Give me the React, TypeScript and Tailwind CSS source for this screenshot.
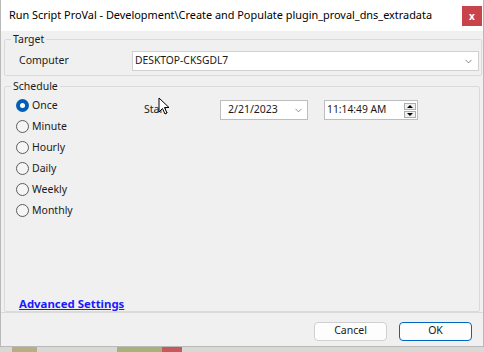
import { ChevronDown } from "lucide-react";

const font = { fontFamily: '"Noto Sans", "Open Sans", sans-serif' };

const options = ["Once", "Minute", "Hourly", "Daily", "Weekly", "Monthly"];

function Radio({ label, checked }: { label: string; checked?: boolean }) {
  return (
    <label className="flex items-center h-[21px] gap-[3px]">
      {checked ? (
        <span className="w-[13px] h-[13px] rounded-full bg-[#005fb8] flex items-center justify-center">
          <span className="w-[5px] h-[5px] rounded-full bg-white" />
        </span>
      ) : (
        <span className="w-[13px] h-[13px] rounded-full border border-[#5c5c5c] bg-[#f5f5f5]" />
      )}
      <span className="text-[10.5px] text-[#1a1a1a]">{label}</span>
    </label>
  );
}

export default function App() {
  return (
    <div
      className="relative w-[484px] h-[352px] bg-[#f0f0f0] overflow-hidden text-[#1a1a1a]"
      style={font}
    >
      <div className="h-[347px] flex flex-col border-x border-b border-[#b9b9b9]">
        {/* title bar */}
        <div className="h-[31px] bg-white flex items-center justify-between pl-[8px] pr-[1px]">
          <span className="text-[10.9px] text-black whitespace-nowrap">
            Run Script ProVal - Development\Create and Populate plugin_proval_dns_extradata
          </span>
          <button className="w-[20px] h-[20px] bg-[#c9444a] text-white text-[10px] font-bold flex items-center justify-center leading-none">
            x
          </button>
        </div>

        <div className="flex-1 flex flex-col px-[3px]">
          {/* target */}
          <fieldset className="border border-[#dadada] rounded-[2px] h-[45px] pl-[14px] pr-[2px]">
            <legend className="text-[10.5px] px-[2px] -ml-[8px] leading-[16px]">Target</legend>
            <div className="flex items-center mt-[4px]">
              <span className="text-[10.5px] w-[113px]">Computer</span>
              <div className="w-[347px] h-[20px] bg-white border border-[#d0d0d0] flex items-center justify-between pl-[2px] pr-[4px]">
                <span className="text-[10.3px]">DESKTOP-CKSGDL7</span>
                <ChevronDown className="w-[11px] h-[11px] text-[#555]" strokeWidth={1.5} />
              </div>
            </div>
          </fieldset>

          {/* schedule */}
          <fieldset className="border border-[#dadada] rounded-[2px] h-[234px] mt-[2px] px-[11px]">
            <legend className="text-[10.5px] px-[2px] -ml-[5px] leading-[16px]">Schedule</legend>
            <div className="flex mt-[1px]">
              <div className="flex flex-col w-[128px]">
                {options.map((o) => (
                  <Radio key={o} label={o} checked={o === "Once"} />
                ))}
              </div>
              <div className="flex items-center h-[20px] mt-[5px]">
                <span className="text-[10.5px] w-[76px]">Start</span>
                <div className="w-[88px] h-[20px] bg-white border border-[#bdbdbd] flex items-center justify-between pl-[7px] pr-[3px]">
                  <span className="text-[10.5px]">2/21/2023</span>
                  <ChevronDown className="w-[11px] h-[11px] text-[#666]" strokeWidth={1.5} />
                </div>
                <div className="ml-[16px] w-[94px] h-[20px] bg-white border border-[#bdbdbd] flex items-center justify-between pl-[2px] pr-[1px]">
                  <span className="text-[10.3px]">11:14:49 AM</span>
                  <div className="flex flex-col gap-[1px]">
                    <span className="w-[12px] h-[7px] border border-[#adadad] bg-[#f0f0f0] flex items-center justify-center">
                      <span className="w-0 h-0 border-x-[3px] border-x-transparent border-b-[3px] border-b-black" />
                    </span>
                    <span className="w-[12px] h-[7px] border border-[#adadad] bg-[#f0f0f0] flex items-center justify-center">
                      <span className="w-0 h-0 border-x-[3px] border-x-transparent border-t-[3px] border-t-black" />
                    </span>
                  </div>
                </div>
              </div>
            </div>
            <div className="mt-[69px] pl-[3px]">
              <a href="#" className="text-[11.4px] font-bold text-[#1a1aff] underline">
                Advanced Settings
              </a>
            </div>
          </fieldset>

          {/* buttons */}
          <div className="flex-1 flex items-center justify-end gap-[12px] pr-[11px] pt-[3px] border-t border-[#dadada] -mx-[3px]">
            <button className="w-[73px] h-[19px] bg-[#fdfdfd] border border-[#d0d0d0] rounded-[4px] text-[10.5px]">
              Cancel
            </button>
            <button className="w-[73px] h-[19px] bg-[#fdfdfd] border border-[#0067c0] rounded-[4px] text-[10.5px]">
              OK
            </button>
          </div>
        </div>
      </div>

      {/* desktop behind the window */}
      <div className="h-[5px] flex bg-[#d8d8d4]">
        <span className="w-[12px]" />
        <span className="w-[25px] bg-[#b7ae84]" />
        <span className="w-[80px]" />
        <span className="w-[45px] bg-[#a9b27a]" />
        <span className="w-[20px] bg-[#c65a5a]" />
      </div>

      {/* mouse pointer */}
      <svg className="absolute left-[158px] top-[97px]" width="12" height="19" viewBox="0 0 12 19">
        <path d="M1 1 L1 15 L4.5 11.5 L7 17 L9 16 L6.5 10.5 L11 10.5 Z" fill="white" stroke="black" strokeWidth="1" strokeLinejoin="round" />
      </svg>
    </div>
  );
}
